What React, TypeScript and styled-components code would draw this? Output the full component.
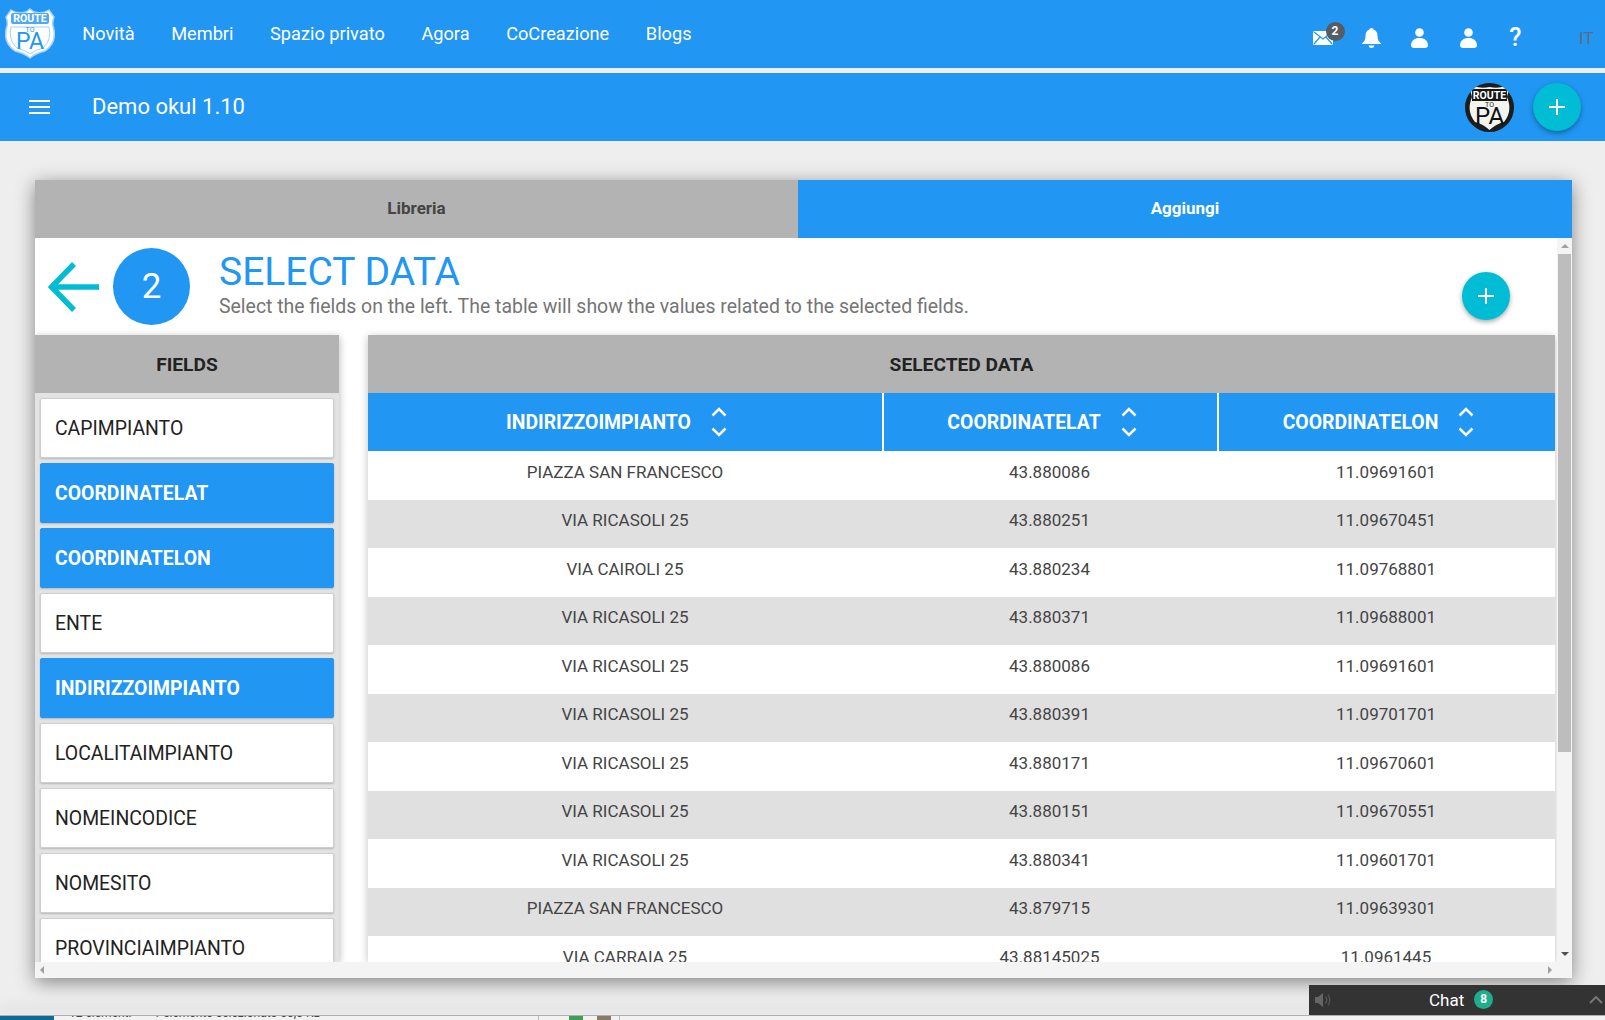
import React from 'react';
import styled, { createGlobalStyle } from 'styled-components';

const GlobalStyle = createGlobalStyle`
  html, body {
    margin: 0;
    padding: 0;
    height: 100%;
    overflow: hidden;
    background: #eeeeee;
    font-family: Roboto, "Liberation Sans", sans-serif;
  }
  * { box-sizing: border-box; }
`;

const Page = styled.div`
  position: relative;
  width: 1605px;
  height: 1020px;
  overflow: hidden;
  display: flex;
  flex-direction: column;
`;

const TopNav = styled.div`
  height: 68px;
  background: #2196f3;
  display: flex;
  align-items: center;
  padding-left: 5px;
  flex: none;
`;

const NavLinks = styled.div`
  display: flex;
  margin-left: 9px;
  margin-top: -1px;
`;

const NavLink = styled.a`
  color: #fff;
  font-size: 18.2px;
  padding: 0 18.3px;
`;

const NavIcons = styled.div`
  margin-left: auto;
  display: flex;
  align-items: center;
  height: 100%;
  padding-top: 8px;
`;

const NavIcon = styled.div`
  position: relative;
  width: 48.5px;
  display: flex;
  justify-content: center;
  color: #fff;
`;

const Badge = styled.span`
  position: absolute;
  top: -9px;
  left: 27px;
  width: 19px;
  height: 19px;
  border-radius: 50%;
  background: #555c63;
  color: #fff;
  font-size: 12px;
  font-weight: 700;
  line-height: 19px;
  text-align: center;
`;

const Help = styled.span`
  font-size: 25px;
  line-height: 24px;
  font-weight: 500;
  color: #fff;
  margin-right: 3px;
`;

const Lang = styled.span`
  width: 64px;
  padding-left: 38px;
  font-size: 17px;
  color: #5f6b78;
`;

const SubBar = styled.div`
  margin-top: 5px;
  height: 68px;
  background: #2196f3;
  display: flex;
  align-items: center;
  flex: none;
  padding: 0 24px 0 29px;
`;

const Burger = styled.div`
  width: 21px;
  display: flex;
  flex-direction: column;
  gap: 4px;
  span {
    height: 2px;
    background: #fff;
  }
`;

const SubTitle = styled.div`
  margin-left: 42px;
  margin-bottom: 2px;
  color: #fff;
  font-size: 22px;
`;

const Avatar = styled.div`
  margin-left: auto;
  width: 49px;
  height: 49px;
  margin-right: 19px;
  border-radius: 50%;
  overflow: hidden;
`;

const Fab = styled.button`
  width: 48px;
  height: 48px;
  padding: 0;
  border: 0;
  border-radius: 50%;
  background: #00bcd4;
  box-shadow: 0 2px 5px rgba(0, 0, 0, 0.35);
  display: flex;
  align-items: center;
  justify-content: center;
  flex: none;
`;

const Main = styled.div`
  flex: 1;
  padding: 39px 33px 0 35px;
  min-height: 0;
`;

const Panel = styled.div`
  height: 798px;
  background: #fff;
  box-shadow: 0 4px 18px rgba(0, 0, 0, 0.45);
  display: flex;
  flex-direction: column;
`;

const Tabs = styled.div`
  display: flex;
  height: 58px;
  flex: none;
`;

const Tab = styled.div<{ $active?: boolean; $width: number }>`
  width: ${(p) => p.$width}px;
  background: ${(p) => (p.$active ? '#2196f3' : '#b3b3b3')};
  color: ${(p) => (p.$active ? '#fff' : '#444')};
  font-size: 17px;
  font-weight: 700;
  padding-bottom: 2px;
  display: flex;
  align-items: center;
  justify-content: center;
`;

const Viewport = styled.div`
  flex: 1;
  min-height: 0;
  display: flex;
`;

const Content = styled.div`
  flex: 1;
  min-width: 0;
  overflow: hidden;
  display: flex;
  flex-direction: column;
`;

const StepHeader = styled.div`
  height: 97px;
  flex: none;
  display: flex;
  padding: 10px 0 0 13px;
`;

const BackArrow = styled.div`
  width: 53px;
  height: 77px;
  display: flex;
  align-items: center;
`;

const StepCircle = styled.div`
  margin-left: 12px;
  width: 77px;
  height: 77px;
  border-radius: 50%;
  background: #2196f3;
  color: #fff;
  font-size: 35px;
  display: flex;
  align-items: center;
  justify-content: center;
  flex: none;
`;

const StepText = styled.div`
  margin-left: 29px;
  flex: 1;
`;

const StepTitle = styled.div`
  color: #2196f3;
  font-size: 39px;
  line-height: 44px;
  margin-top: 2px;
`;

const StepHint = styled.div`
  color: #757575;
  font-size: 19.45px;
  line-height: 24px;
  margin-top: 1px;
`;

const HeaderAction = styled.div`
  padding: 24px 47px 0 0;
`;

const Columns = styled.div`
  flex: 1;
  min-height: 0;
  display: flex;
  gap: 29px;
  padding-right: 2px;
`;

const FieldsPanel = styled.div`
  width: 304px;
  flex: none;
  background: #e3e3e3;
  box-shadow: 0 2px 8px rgba(0, 0, 0, 0.3);
`;

const SectionTitle = styled.div`
  height: 58px;
  background: #b3b3b3;
  color: #222;
  font-size: 19.2px;
  font-weight: 700;
  display: flex;
  align-items: center;
  justify-content: center;
`;

const FieldList = styled.div`
  display: flex;
  flex-direction: column;
  gap: 5px;
  padding: 5px;
`;

const FieldItem = styled.div<{ $selected?: boolean }>`
  height: 60px;
  flex: none;
  border: 1px solid ${(p) => (p.$selected ? '#2196f3' : '#cfcfcf')};
  border-radius: 2px;
  background: ${(p) => (p.$selected ? '#2196f3' : '#fff')};
  color: ${(p) => (p.$selected ? '#fff' : '#222')};
  font-size: 19.4px;
  font-weight: ${(p) => (p.$selected ? 700 : 400)};
  box-shadow: 0 1px 2px rgba(0, 0, 0, 0.2);
  padding-left: 14px;
  display: flex;
  align-items: center;
`;

const DataPanel = styled.div`
  flex: 1;
  min-width: 0;
  box-shadow: 0 2px 8px rgba(0, 0, 0, 0.25);
`;

const Grid = styled.div`
  display: grid;
  grid-template-columns: 514px 335px 1fr;
`;

const HeadCell = styled.div<{ $divider?: boolean }>`
  height: 58px;
  background: #2196f3;
  border-left: ${(p) => (p.$divider ? '2px solid #fff' : '0')};
  color: #fff;
  font-size: 19.4px;
  font-weight: 700;
  padding-right: 17px;
  display: flex;
  align-items: center;
  justify-content: center;
  gap: 20px;
`;

const Cell = styled.div<{ $odd: boolean }>`
  height: 48.5px;
  background: ${(p) => (p.$odd ? '#e0e0e0' : '#fff')};
  color: #444;
  font-size: 17px;
  text-align: center;
  padding-top: 9.5px;
  line-height: 22px;
`;

const VScroll = styled.div`
  width: 15px;
  flex: none;
  background: #f4f4f4;
  display: flex;
  flex-direction: column;
  align-items: center;
`;

const ScrollArrow = styled.div<{ $dir: 'up' | 'down' | 'left' | 'right' }>`
  width: 0;
  height: 0;
  flex: none;
  border-style: solid;
  border-color: transparent;
  ${(p) => p.$dir === 'up' && 'border-width: 0 4px 4px 4px; border-bottom-color: #a0a0a0; margin: 6px 0;'}
  ${(p) => p.$dir === 'down' && 'border-width: 4px 4px 0 4px; border-top-color: #505050; margin: auto 0 6px;'}
  ${(p) => p.$dir === 'left' && 'border-width: 4px 4px 4px 0; border-right-color: #a0a0a0;'}
  ${(p) => p.$dir === 'right' && 'border-width: 4px 0 4px 4px; border-left-color: #a0a0a0;'}
`;

const VThumb = styled.div`
  width: 13px;
  height: 498px;
  background: #bdbdbd;
`;

const HScroll = styled.div`
  height: 16px;
  flex: none;
  background: #f4f4f4;
  display: flex;
  align-items: center;
  justify-content: space-between;
  padding: 0 20px 0 5px;
`;

const ChatBar = styled.div`
  position: absolute;
  left: 1309px;
  top: 985px;
  width: 296px;
  height: 30px;
  background: #333;
  color: #fff;
  font-size: 17px;
  display: flex;
  align-items: center;
  padding: 0 0 0 6px;
`;

const ChatLabel = styled.div`
  position: absolute;
  left: 120px;
  display: flex;
  align-items: center;
  gap: 10px;
`;

const ChatBadge = styled.span`
  width: 19px;
  height: 19px;
  border-radius: 50%;
  background: #1fae8c;
  font-size: 12px;
  font-weight: 700;
  line-height: 19px;
  text-align: center;
  margin-top: -2px;
`;

const ChatCaret = styled.div`
  margin-left: auto;
  margin-right: 2px;
  display: flex;
`;

const Taskbar = styled.div`
  position: absolute;
  left: 0;
  right: 0;
  top: 1015px;
  height: 5px;
  overflow: hidden;
  background: #f2f2f2;
  border-top: 1px solid #b0b0b0;
  box-shadow: 0 -8px 14px rgba(0, 0, 0, 0.1);
  display: flex;
`;

const TaskStart = styled.div`
  width: 54px;
  background: #0f6b93;
`;

const TaskText = styled.div`
  margin-left: 15px;
  margin-top: -10px;
  width: 469px;
  flex: none;
  display: flex;
  gap: 22px;
  font-size: 12px;
  line-height: 14px;
  color: #444;
`;

const TaskTools = styled.div`
  display: flex;
  align-items: flex-start;
  gap: 14px;
  padding: 0 8px 0 30px;
  border-left: 1px solid #bbb;
  border-right: 1px solid #bbb;
`;

const TaskDot = styled.span<{ $color: string }>`
  width: 14px;
  height: 5px;
  background: ${(p) => p.$color};
`;

const fields: { name: string; selected?: boolean }[] = [
  { name: 'CAPIMPIANTO' },
  { name: 'COORDINATELAT', selected: true },
  { name: 'COORDINATELON', selected: true },
  { name: 'ENTE' },
  { name: 'INDIRIZZOIMPIANTO', selected: true },
  { name: 'LOCALITAIMPIANTO' },
  { name: 'NOMEINCODICE' },
  { name: 'NOMESITO' },
  { name: 'PROVINCIAIMPIANTO' },
];

const columns = ['INDIRIZZOIMPIANTO', 'COORDINATELAT', 'COORDINATELON'];

const rows = [
  ['PIAZZA SAN FRANCESCO', '43.880086', '11.09691601'],
  ['VIA RICASOLI 25', '43.880251', '11.09670451'],
  ['VIA CAIROLI 25', '43.880234', '11.09768801'],
  ['VIA RICASOLI 25', '43.880371', '11.09688001'],
  ['VIA RICASOLI 25', '43.880086', '11.09691601'],
  ['VIA RICASOLI 25', '43.880391', '11.09701701'],
  ['VIA RICASOLI 25', '43.880171', '11.09670601'],
  ['VIA RICASOLI 25', '43.880151', '11.09670551'],
  ['VIA RICASOLI 25', '43.880341', '11.09601701'],
  ['PIAZZA SAN FRANCESCO', '43.879715', '11.09639301'],
  ['VIA CARRAIA 25', '43.88145025', '11.0961445'],
];

const shieldPath =
  'M25 1 L29 4 Q38 6 44 2 L49 9 Q47 14 48 18 Q53 34 40 43 Q31 45 25 50 Q19 45 10 43 Q-3 34 2 18 Q3 14 1 9 L6 2 Q12 6 21 4 Z';

const Logo = () => (
  <svg width="50" height="52" viewBox="0 0 50 52">
    <path d={shieldPath} fill="#fff" stroke="#a9d3f7" strokeWidth="1.5" />
    <rect x="6" y="5" width="38" height="11" rx="2" fill="#4faaf5" />
    <path d="M6 19 H44 Q47 32 38 40 Q30 42 25 46 Q20 42 12 40 Q3 32 6 19 Z" fill="none" stroke="#8cc8f8" strokeWidth="0.8" />
    <text x="25" y="14" textAnchor="middle" fontSize="10.5" fontWeight="700" fill="#fff" fontFamily="Roboto">ROUTE</text>
    <text x="25" y="24" textAnchor="middle" fontSize="7" fill="#2196f3" fontFamily="Roboto">TO</text>
    <text x="25" y="41" textAnchor="middle" fontSize="23" fill="#2196f3" fontFamily="Roboto">PA</text>
  </svg>
);

const AvatarLogo = () => (
  <svg width="49" height="49" viewBox="0 0 49 49">
    <rect width="49" height="49" fill="#1c1c1c" />
    <path d="M24.5 47 Q18 41 10 39 Q1 28 7 14 L5 6 L9 3 Q16 6 24.5 4 Q33 6 40 3 L44 6 L42 14 Q48 28 39 39 Q31 41 24.5 47 Z" fill="#f3f3f0" />
    <rect x="7" y="6" width="35" height="12" fill="#161616" />
    <text x="24.5" y="16" textAnchor="middle" fontSize="10.5" fontWeight="700" fill="#fff" fontFamily="Roboto">ROUTE</text>
    <text x="24.5" y="24" textAnchor="middle" fontSize="7" fill="#222" fontFamily="Roboto">TO</text>
    <text x="24.5" y="41" textAnchor="middle" fontSize="24" fill="#111" fontFamily="Roboto">PA</text>
  </svg>
);

const MailIcon = () => (
  <svg width="20" height="14" viewBox="0 0 20 14">
    <rect width="20" height="14" rx="1.5" fill="#fff" />
    <path d="M1 1 L10 8 L19 1 M1 13 L7 6 M19 13 L13 6" fill="none" stroke="#2196f3" strokeWidth="1.2" />
  </svg>
);

const BellIcon = () => (
  <svg width="19" height="20" viewBox="0 0 19 20" fill="#fff">
    <path d="M9.5 0 C11 0 11.5 1 11.5 1.6 C14.5 2.6 15.5 5 15.5 8 C15.5 11.5 16.5 13 19 15.5 L19 16 L0 16 L0 15.5 C2.5 13 3.5 11.5 3.5 8 C3.5 5 4.5 2.6 7.5 1.6 C7.5 1 8 0 9.5 0 Z" />
    <path d="M6.5 17.5 H12.5 C12 19.2 11 20 9.5 20 C8 20 7 19.2 6.5 17.5 Z" />
  </svg>
);

const UserIcon = () => (
  <svg width="17" height="20" viewBox="0 0 17 20" fill="#fff">
    <circle cx="8.5" cy="4.5" r="4.3" />
    <path d="M0 17.5 C0 12.5 3.5 10 8.5 10 C13.5 10 17 12.5 17 17.5 C17 19 15.5 20 14 20 H3 C1.5 20 0 19 0 17.5 Z" />
  </svg>
);

const PlusIcon = () => (
  <svg width="16" height="16" viewBox="0 0 16 16">
    <path d="M8 0 V16 M0 8 H16" stroke="#fff" strokeWidth="2" />
  </svg>
);

const ArrowIcon = () => (
  <svg width="53" height="52" viewBox="0 0 53 52">
    <path d="M51 26 H4 M26 3 L3.5 26 L26 49" fill="none" stroke="#00bcd4" strokeWidth="5.5" strokeLinejoin="miter" />
  </svg>
);

const SortIcon = () => (
  <svg width="16" height="30" viewBox="0 0 16 30">
    <path d="M1.5 8.5 L8 2 L14.5 8.5 M1.5 21.5 L8 28 L14.5 21.5" fill="none" stroke="#fff" strokeWidth="2.5" />
  </svg>
);

const SpeakerIcon = () => (
  <svg width="16" height="14" viewBox="0 0 16 14">
    <path d="M0 4 H3 L8 0 V14 L3 10 H0 Z" fill="#666" />
    <path d="M10.5 3.5 Q13 7 10.5 10.5 M13 1.5 Q16.5 7 13 12.5" fill="none" stroke="#555" strokeWidth="1.3" />
  </svg>
);

const App: React.FC = () => {
  return (
    <Page>
      <GlobalStyle />
      <TopNav>
        <Logo />
        <NavLinks>
          {['Novità', 'Membri', 'Spazio privato', 'Agora', 'CoCreazione', 'Blogs'].map((item) => (
            <NavLink key={item}>{item}</NavLink>
          ))}
        </NavLinks>
        <NavIcons>
          <NavIcon>
            <MailIcon />
            <Badge>2</Badge>
          </NavIcon>
          <NavIcon><BellIcon /></NavIcon>
          <NavIcon><UserIcon /></NavIcon>
          <NavIcon><UserIcon /></NavIcon>
          <NavIcon><Help>?</Help></NavIcon>
          <Lang>IT</Lang>
        </NavIcons>
      </TopNav>
      <SubBar>
        <Burger><span /><span /><span /></Burger>
        <SubTitle>Demo okul 1.10</SubTitle>
        <Avatar><AvatarLogo /></Avatar>
        <Fab><PlusIcon /></Fab>
      </SubBar>
      <Main>
        <Panel>
          <Tabs>
            <Tab $width={763}>Libreria</Tab>
            <Tab $width={774} $active>Aggiungi</Tab>
          </Tabs>
          <Viewport>
            <Content>
              <StepHeader>
                <BackArrow><ArrowIcon /></BackArrow>
                <StepCircle>2</StepCircle>
                <StepText>
                  <StepTitle>SELECT DATA</StepTitle>
                  <StepHint>Select the fields on the left. The table will show the values related to the selected fields.</StepHint>
                </StepText>
                <HeaderAction><Fab><PlusIcon /></Fab></HeaderAction>
              </StepHeader>
              <Columns>
                <FieldsPanel>
                  <SectionTitle>FIELDS</SectionTitle>
                  <FieldList>
                    {fields.map((field) => (
                      <FieldItem key={field.name} $selected={field.selected}>{field.name}</FieldItem>
                    ))}
                  </FieldList>
                </FieldsPanel>
                <DataPanel>
                  <SectionTitle>SELECTED DATA</SectionTitle>
                  <Grid>
                    {columns.map((col, i) => (
                      <HeadCell key={col} $divider={i > 0}>
                        {col}
                        <SortIcon />
                      </HeadCell>
                    ))}
                    {rows.map((row, r) =>
                      row.map((value, c) => (
                        <Cell key={`${r}-${c}`} $odd={r % 2 === 1}>{value}</Cell>
                      ))
                    )}
                  </Grid>
                </DataPanel>
              </Columns>
            </Content>
            <VScroll>
              <ScrollArrow $dir="up" />
              <VThumb />
              <ScrollArrow $dir="down" />
            </VScroll>
          </Viewport>
          <HScroll>
            <ScrollArrow $dir="left" />
            <ScrollArrow $dir="right" />
          </HScroll>
        </Panel>
      </Main>
      <Taskbar>
        <TaskStart />
        <TaskText>
          <span>12 elementi</span>
          <span>1 elemento selezionato 60,0 KB</span>
        </TaskText>
        <TaskTools>
          <TaskDot $color="#3f9e58" />
          <TaskDot $color="#8a7a6a" />
        </TaskTools>
      </Taskbar>
      <ChatBar>
        <SpeakerIcon />
        <ChatLabel>
          Chat
          <ChatBadge>8</ChatBadge>
        </ChatLabel>
        <ChatCaret>
          <svg width="14" height="8" viewBox="0 0 14 8">
            <path d="M1 7 L7 1 L13 7" fill="none" stroke="#777" strokeWidth="2" />
          </svg>
        </ChatCaret>
      </ChatBar>
    </Page>
  );
};

export default App;
